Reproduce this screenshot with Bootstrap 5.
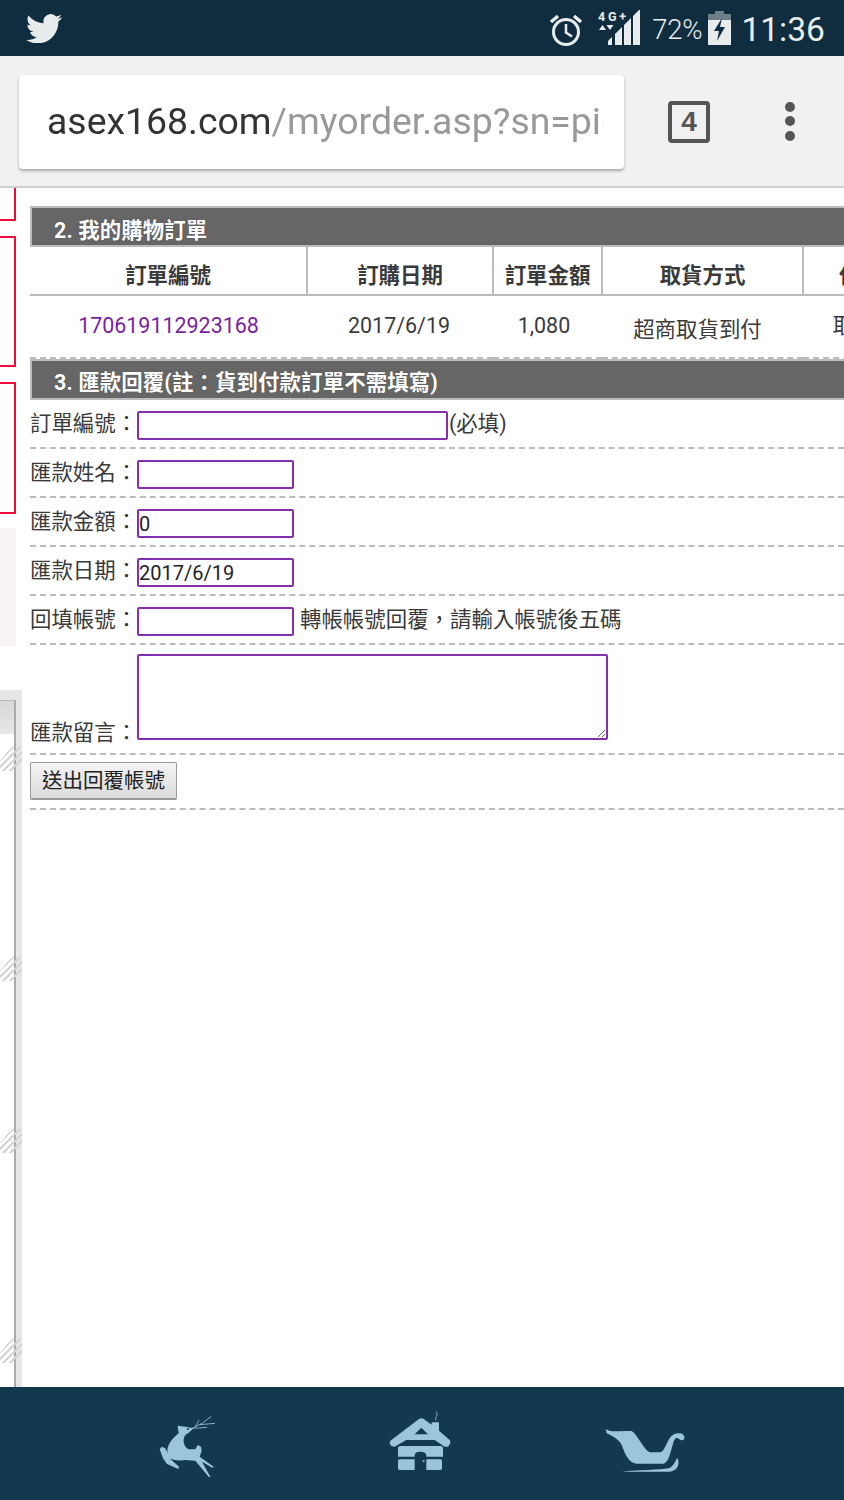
<!DOCTYPE html>
<html lang="zh-Hant"><head><meta charset="utf-8"><title>asex168</title>
<link href="https://cdn.jsdelivr.net/npm/bootstrap@5.3.0/dist/css/bootstrap.min.css" rel="stylesheet">
<style>
html,body{margin:0;height:1500px;overflow:hidden;background:#fff}
body{font-family:Roboto,"Noto Sans CJK TC",sans-serif;font-size:21.45px;color:#3a3a3a;line-height:1.2}
.phone{height:1500px;width:844px;overflow:hidden}
.statusbar{height:56px;background:#102d3f;color:#e8eced;padding-left:26px;flex:none}
.bird{margin-top:-1px}
.stat-alarm{margin-left:auto;margin-top:3px}
.stat-net{margin-left:15px}
.pct{font-size:27.5px;font-weight:300;margin-left:10px;margin-top:3px;letter-spacing:-.2px}
.batt{margin-left:6px}
.clock{font-size:33.6px;margin-left:10px;margin-right:19px;font-weight:400;margin-top:5px}
.toolbar{height:132px;background:#f1f1f1;border-bottom:2px solid #cfcfcf;flex:none;padding-left:19px}
.urlbox{width:605px;height:94px;background:#fff;border-radius:4px;box-shadow:0 2px 3px rgba(0,0,0,.3);padding-left:28px;padding-right:20px;margin-top:2px}
.urltext{font-size:37.4px;white-space:nowrap;overflow:hidden;color:#999;margin-top:-2px;-webkit-mask-image:linear-gradient(90deg,#000 99%,transparent);mask-image:linear-gradient(90deg,#000 99%,transparent)}
.urltext b{font-weight:400;color:#333}
.tabicon{width:42px;height:42px;border:4px solid #555;border-radius:4px;margin-left:44px;margin-top:2px;font-size:28px;font-weight:700;color:#555;line-height:34px;text-align:center;font-family:"Liberation Sans",sans-serif}
.dots{margin-left:74px;margin-top:1px}
.contentarea{flex:1 1 auto;min-height:0;overflow:hidden}
.gutter{width:30px;flex:none}
.redbox{border:2px solid #ee0a3c;border-left:0;width:16px}
.r1{height:33px;border-top:0}
.r2{height:131px;margin-top:15px}
.r3{height:132px;margin-top:15px}
.pinkbox{width:16px;height:118px;background:#f8f3f5;margin-top:14px}
.sidepanel{width:22px;margin-top:44px;height:700px;background:#e6e6e6;padding:10px 7px 0 0}
.sideinner{background:#fff;height:100%;border-right:2px solid #aaa;border-top:1px solid #bbb;margin-right:-1px}
.sidehead{height:33px;background:linear-gradient(#d8d8d8,#e6e6e6)}
.hatch{height:24px;width:22px;background:repeating-linear-gradient(135deg,transparent 0 3px,#d4d4d4 3px 5px);-webkit-mask-image:linear-gradient(to top left,transparent 15%,#000 15% 72%,transparent 72%);mask-image:linear-gradient(to top left,transparent 15%,#000 15% 72%,transparent 72%)}
.h1x{margin-top:13px}.h2x{margin-top:186px}.h3x{margin-top:148px}.h4x{margin-top:186px}
.mainpane{flex:1 1 auto;min-width:0;padding-top:18px;overflow:hidden}
.secbar{width:900px;height:41px;background:#666;border:2px solid #bbb;border-right:0;color:#fff;font-weight:700;padding-left:22px;line-height:46px;white-space:nowrap;letter-spacing:.1px;text-shadow:0 0 1px #444}
.secbar-low{line-height:44px}
.ordertable{table-layout:fixed;width:930px;margin:0;color:#3a3a3a;border-collapse:collapse}
.ordertable th,.ordertable td{padding:0;text-align:center;background:transparent;color:#3a3a3a;white-space:nowrap;vertical-align:middle}
.ordertable th{height:48px;font-weight:700;border:0;border-right:2px solid #bbb;border-bottom:2px solid #bbb;padding-top:10px}
.ordertable td{height:63px;border:0;border-bottom:2px dashed #bbb;padding-bottom:1px}
.ordertable a{color:#7b1fa2;text-decoration:none}
.ordertable .cell-date{padding-right:2px}
.ordertable .cell-amount{padding-right:7px}
.ordertable .cell-last{padding-right:12px}
.ctext{display:inline-block;transform:translate(-5px,4px)}
.formrow{border-bottom:2px dashed #bbb;padding:11px 0 7px;white-space:nowrap}
.flabel{width:107px;flex:none;line-height:25px;margin-bottom:4px}
.finput{height:29px;border:2px solid #8430ac;border-radius:2px;padding:0;background:#fff;font-family:inherit;font-size:20px;color:#222;outline:0}
.w-long{width:311px}.w-short{width:157px}
.aftertext{line-height:25px;margin-left:1px;margin-bottom:4px}
.gaptext{margin-left:6px}
.ftextarea{width:471px;height:86px;border:2px solid #8430ac;border-radius:2px;background:#fff;outline:0;display:block}
.rowarea{padding-top:9px;padding-bottom:13px}
.rowarea .flabel{margin-bottom:-5px}
.rowbtn{padding:7px 0 8px}
.sendbtn{width:147px;height:38px;padding:0;background:linear-gradient(#f4f4f4,#dcdcdc);border:1px solid #999;border-bottom-width:2px;border-radius:2px;font-size:20.5px;color:#222;line-height:34px}
.bottomnav{height:113px;background:#13394e;padding:23px 0 0 157px;flex:none}
.bottomnav svg{flex:none;display:block}
.nav2{margin-left:171px}.nav3{margin-left:153px}
</style></head>
<body>
<div class="phone d-flex flex-column">
  <div class="statusbar d-flex align-items-center">
    <svg class="bird" width="36" height="30" viewBox="0 1.5 24 20" fill="#e8eced"><path d="M23.953 4.57a10 10 0 01-2.825.775 4.958 4.958 0 002.163-2.723c-.951.555-2.005.959-3.127 1.184a4.92 4.92 0 00-8.384 4.482C7.69 8.095 4.067 6.13 1.64 3.162a4.822 4.822 0 00-.666 2.475c0 1.71.87 3.213 2.188 4.096a4.904 4.904 0 01-2.228-.616v.06a4.923 4.923 0 003.946 4.827 4.996 4.996 0 01-2.212.085 4.936 4.936 0 004.604 3.417 9.867 9.867 0 01-6.102 2.105c-.39 0-.779-.023-1.17-.067a13.995 13.995 0 007.557 2.209c9.053 0 13.998-7.496 13.998-13.985 0-.21 0-.42-.015-.63A9.935 9.935 0 0024 4.59z"/></svg>
    <svg class="stat-alarm" width="34" height="36" viewBox="0 0 34 36" fill="none" stroke="#e8eced"><circle cx="17" cy="20" r="12.5" stroke-width="3"/><path d="M17 12v8.500l6 4" stroke-width="2.500"/><path d="M2 10 9 4M32 10 25 4" stroke-width="3.500"/></svg>
    <svg class="stat-net" width="44" height="36" viewBox="0 0 44 36"><text x="0" y="11" font-family="Roboto" font-size="12.500" font-weight="700" fill="#e8eced" textLength="28">4G+</text><path d="M1 20 4.500 15 8 20ZM8.500 15h7l-3.500 5Z" fill="#e8eced"/><path d="M10 35v-4l4-4v8ZM17 35V24l7-7v18ZM26 35V15l7-7v27ZM35 35V6l7-7v36Z" fill="#e8eced"/></svg>
    <span class="pct">72%</span>
    <svg class="batt" width="23" height="34" viewBox="0 0 23 34"><path d="M7 0h9v3h7v9H0V3h7Z" fill="#6d7e89"/><path d="M0 9h23v25H0Z" fill="#e8eced"/><path d="M14 7 6 20h5l-2 10 8-14h-5Z" fill="#102d3f"/></svg>
    <span class="clock">11:36</span>
  </div>
  <div class="toolbar d-flex align-items-center">
    <div class="urlbox d-flex align-items-center"><div class="urltext"><b>asex168.com</b>/myorder.asp?sn=pickup</div></div>
    <div class="tabicon">4</div>
    <svg class="dots" width="12" height="42" viewBox="0 0 12 42" fill="#555"><circle cx="6" cy="6" r="5"/><circle cx="6" cy="20" r="5"/><circle cx="6" cy="35" r="5"/></svg>
  </div>
  <div class="contentarea d-flex">
    <div class="gutter">
      <div class="redbox r1"></div>
      <div class="redbox r2"></div>
      <div class="redbox r3"></div>
      <div class="pinkbox"></div>
      <div class="sidepanel"><div class="sideinner">
        <div class="sidehead"></div>
        <div class="hatch h1x"></div><div class="hatch h2x"></div><div class="hatch h3x"></div><div class="hatch h4x"></div>
      </div></div>
    </div>
    <div class="mainpane">
      <div class="secbar">2. 我的購物訂單</div>
      <table class="table ordertable">
        <colgroup><col style="width:277px"><col style="width:186px"><col style="width:109px"><col style="width:201px"><col style="width:157px"></colgroup>
        <thead><tr><th>訂單編號</th><th>訂購日期</th><th>訂單金額</th><th>取貨方式</th><th>付款狀態</th></tr></thead>
        <tbody><tr><td><a href="#">170619112923168</a></td><td class="cell-date">2017/6/19</td><td class="cell-amount">1,080</td><td><span class="ctext">超商取貨到付</span></td><td class="cell-last">取貨付款</td></tr></tbody>
      </table>
      <div class="secbar secbar-low">3. 匯款回覆(註：貨到付款訂單不需填寫)</div>
      <form>
        <div class="formrow d-flex align-items-end"><span class="flabel">訂單編號：</span><input class="finput w-long" type="text"><span class="aftertext">(必填)</span></div>
        <div class="formrow d-flex align-items-end"><span class="flabel">匯款姓名：</span><input class="finput w-short" type="text"></div>
        <div class="formrow d-flex align-items-end"><span class="flabel">匯款金額：</span><input class="finput w-short" type="text" value="0"></div>
        <div class="formrow d-flex align-items-end"><span class="flabel">匯款日期：</span><input class="finput w-short" type="text" value="2017/6/19"></div>
        <div class="formrow d-flex align-items-end"><span class="flabel">回填帳號：</span><input class="finput w-short" type="text"><span class="aftertext gaptext">轉帳帳號回覆，請輸入帳號後五碼</span></div>
        <div class="formrow rowarea d-flex align-items-end"><span class="flabel">匯款留言：</span><textarea class="ftextarea"></textarea></div>
        <div class="formrow rowbtn"><button type="button" class="btn sendbtn">送出回覆帳號</button></div>
      </form>
    </div>
  </div>
  <div class="bottomnav d-flex align-items-start">
    <svg width="60" height="70" viewBox="110 60 180 210" fill="#9cc5dc"><path d="M172 107 195 110 220 115 205 128 195 135C185 150 190 170 205 178L225 178 232 165 242 170 244 182 238 200 280 230 277 234 245 215 270 260 266 262 225 212 195 210C175 213 155 210 148 205L176 230 174 237 140 222 128 205 118 178 124 170 135 175 142 190C138 170 150 150 175 130Z"/><circle cx="203" cy="117" r="3" fill="#13394e"/><path d="M215 115 245 100 273 79M225 110 236 90M238 104 284 100M220 115 260 112" fill="none" stroke="#9cc5dc" stroke-width="2.500"/></svg>
    <svg class="nav2" width="64" height="70" viewBox="805 60 192 210" fill="#9cc5dc"><path fill-rule="evenodd" d="M898 87Q905 83 912 87L936 104V97H958V122L990 150Q996 158 985 170L975 170 945 150H860L825 170 815 168Q805 158 815 150ZM905 113 885 133H925Z"/><path d="M842 168H963Q970 168 970 175V200H920V195Q918 185 902 185 886 185 885 195V200H835V175Q835 168 842 168ZM840 208H885V240H840Q835 240 835 235V213Q835 208 840 208ZM920 208H962Q967 208 967 213V235Q967 240 962 240H920Z"/><circle cx="912" cy="213" r="3"/><path d="M950 65Q955 75 950 80 946 85 949 91" fill="none" stroke="#9cc5dc" stroke-width="2.500"/></svg>
    <svg class="nav3" width="80" height="70" viewBox="135 60 240 210" fill="#9cc5dc"><path d="M137 117C150 128 175 122 215 123 235 135 250 180 270 187L300 187C320 185 320 130 355 130 370 128 378 140 370 150 362 153 358 145 350 143 335 145 335 215 310 221L230 221C205 220 195 190 185 165 175 145 150 135 140 130Z"/><path d="M185 245C240 240 300 240 325 235 340 230 345 215 352 203 362 225 350 245 325 245Z"/></svg>
  </div>
</div>
<script src="https://cdn.jsdelivr.net/npm/bootstrap@5.3.0/dist/js/bootstrap.bundle.min.js"></script>
</body></html>
